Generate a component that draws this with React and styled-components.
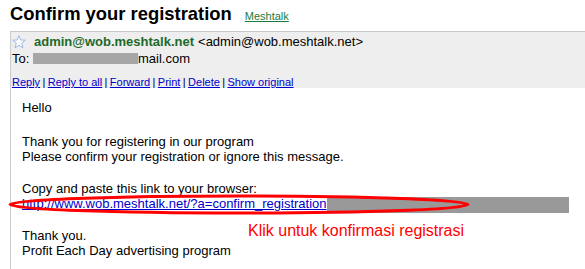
import React from 'react';
import styled, { createGlobalStyle } from 'styled-components';

const GlobalStyle = createGlobalStyle`
    body {
        margin: 0;
        background: #ffffff;
        font-family: Arial, "Liberation Sans", sans-serif;
        color: #000000;
    }
`;

const actions = ['Reply', 'Reply to all', 'Forward', 'Print', 'Delete', 'Show original'];

const Star = () => (
    <StarIcon viewBox="0 0 14 14">
        <path
            d="M7 0.8 L8.7 5 L13.3 5.2 L9.7 8.1 L10.9 12.8 L7 10.2 L3.1 12.8 L4.3 8.1 L0.7 5.2 L5.3 5 Z"
            fill="#ffffff"
            stroke="#9db8e6"
            strokeWidth="1"
            strokeLinejoin="round"
        />
    </StarIcon>
);

const RedEllipse = () => (
    <EllipseSvg viewBox="0 0 462 21" preserveAspectRatio="none">
        <ellipse cx="231" cy="10.5" rx="229" ry="8.5" fill="none" stroke="#ff0000" strokeWidth="3" />
    </EllipseSvg>
);

class App extends React.Component {
    render() {
        return (
            <Page>
                <GlobalStyle />
                <TitleRow>
                    <Title>Confirm your registration</Title>
                    <LabelLink href="#">Meshtalk</LabelLink>
                </TitleRow>
                <Message>
                    <Header>
                        <SenderRow>
                            <Star />
                            <SenderName>admin@wob.meshtalk.net</SenderName>
                            <span>&lt;admin@wob.meshtalk.net&gt;</span>
                        </SenderRow>
                        <ToRow>
                            To: <Redacted $width={105} $height={11} />mail.com
                        </ToRow>
                        <Actions>
                            {actions.map((action, index) => (
                                <React.Fragment key={action}>
                                    {index > 0 && <Separator>|</Separator>}
                                    <ActionLink href="#">{action}</ActionLink>
                                </React.Fragment>
                            ))}
                        </Actions>
                    </Header>
                    <Body>
                        <Para>Hello</Para>
                        <Para>
                            Thank you for registering in our program<br />
                            Please confirm your registration or ignore this message.
                        </Para>
                        <Para $shift={-2}>
                            Copy and paste this link to your browser:<br />
                            <LinkLine>
                                <RedEllipse />
                                <BodyLink href="#">http://www.wob.meshtalk.net/?a=confirm_registration</BodyLink>
                                <LinkRedaction />
                            </LinkLine>
                        </Para>
                        <Para $relative $shift={-2}>
                            Thank you.<br />
                            Profit Each Day advertising program
                            <Note>Klik untuk konfirmasi registrasi</Note>
                        </Para>
                    </Body>
                </Message>
            </Page>
        );
    }
}

export default App;

const Page = styled.div`
    padding: 3px 0 0 10px;
`;

const TitleRow = styled.div`
    display: flex;
    align-items: baseline;
    gap: 13px;
    height: 22px;
`;

const Title = styled.h1`
    margin: 0;
    font-size: 18.4px;
    line-height: 22px;
    font-weight: bold;
    color: #000000;
`;

const LabelLink = styled.a`
    font-size: 11px;
    color: #1b7a3e;
    text-decoration: underline;
`;

const Message = styled.div`
    margin-top: 6px;
    border-left: 1px solid #cccccc;
`;

const Header = styled.div`
    box-sizing: border-box;
    background: #eeeeee;
    border-top: 1px solid #c6c6c6;
    padding: 1px 0 0 1px;
    height: 57px;
    font-size: 13px;
`;

const SenderRow = styled.div`
    display: flex;
    align-items: center;
    height: 17px;
    line-height: 17px;
`;

const StarIcon = styled.svg`
    width: 14px;
    height: 14px;
    margin-right: 8px;
    flex-shrink: 0;
`;

const SenderName = styled.b`
    color: #1d6a2a;
    margin-right: 4px;
`;

const ToRow = styled.div`
    line-height: 17px;
    height: 17px;
`;

const Redacted = styled.span`
    display: inline-block;
    width: ${p => p.$width}px;
    height: ${p => p.$height}px;
    background: #a6a6a6;
    vertical-align: -1px;
`;

const Actions = styled.div`
    margin-top: 8px;
    font-size: 11px;
    line-height: 14px;
`;

const ActionLink = styled.a`
    color: #0000cc;
    text-decoration: underline;
`;

const Separator = styled.span`
    margin: 0 2.4px;
    color: #000000;
`;

const Body = styled.div`
    box-sizing: border-box;
    padding: 12px 0 0 11px;
    height: 181px;
    font-size: 13px;
    line-height: 15px;
    display: flex;
    flex-direction: column;
    gap: 19px;
`;

const Para = styled.p`
    margin: ${p => p.$shift || 0}px 0 0 0;
    position: ${p => (p.$relative ? 'relative' : 'static')};
`;

const LinkLine = styled.span`
    position: relative;
    display: inline-block;
    height: 15px;
`;

const BodyLink = styled.a`
    color: #0000cc;
    text-decoration: underline;
`;

const LinkRedaction = styled.span`
    display: inline-block;
    width: 242px;
    height: 16px;
    background: #999999;
    vertical-align: -5px;
`;

const EllipseSvg = styled.svg`
    position: absolute;
    left: -14px;
    top: -2px;
    width: 462px;
    height: 21px;
    overflow: visible;
    pointer-events: none;
`;

const Note = styled.span`
    position: absolute;
    left: 226px;
    top: -6px;
    font-size: 16px;
    line-height: 18px;
    color: #ff0000;
    white-space: nowrap;
`;
